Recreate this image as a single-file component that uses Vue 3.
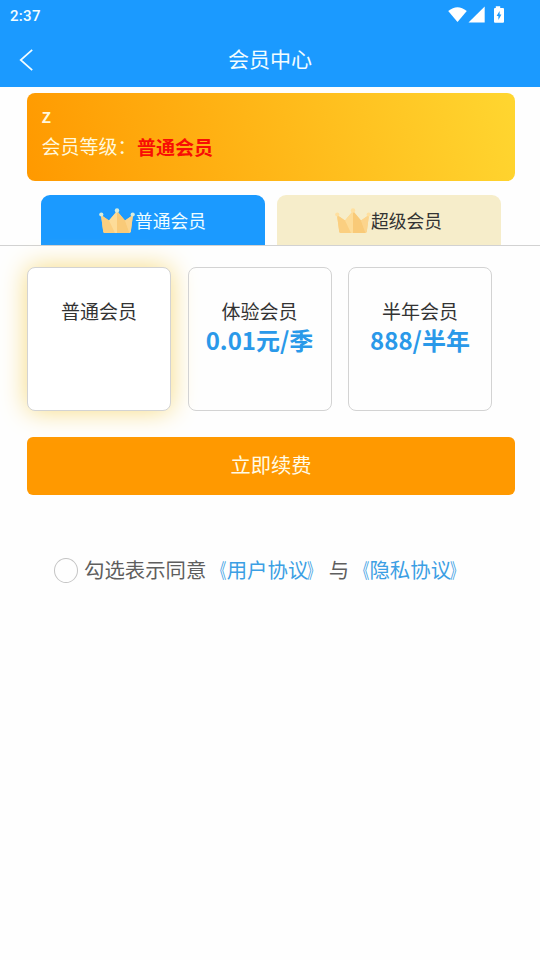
<script setup>
import { ref } from 'vue'

const activeTab = ref(0)
const activePlan = ref(0)
const agreed = ref(false)

const tabs = ['普通会员', '超级会员']
const plans = [
  { name: '普通会员', price: '' },
  { name: '体验会员', price: '0.01元/季' },
  { name: '半年会员', price: '888/半年' },
]
</script>

<template>
  <div class="page">
    <header class="header">
      <div class="status">
        <span class="clock">2:37</span>
        <svg class="status-icons" width="58" height="20" viewBox="0 0 58 20">
          <path d="M0.2 5.1Q9.5-2.8 18.8 5.1L9.5 16Z" fill="#fff" />
          <path d="M20.5 16.5L36.7 0.5V16.5Z" fill="#fff" />
          <path d="M47.8 0.2h4.4v1.7H55a1 1 0 0 1 1 1V15.8a1 1 0 0 1-1 1H47a1 1 0 0 1-1-1V2.9a1 1 0 0 1 1-1h.8Z" fill="#fff" />
          <path d="M51.6 5L48.6 10h1.8v3.9l3-5.3h-1.8Z" fill="#1b9aff" />
        </svg>
      </div>
      <div class="nav">
        <svg class="back" width="16" height="24" viewBox="0 0 16 24">
          <path d="M13.2 1.8L1.7 12L13.2 22.2" fill="none" stroke="#f2fdff" stroke-width="1.7" />
        </svg>
        <h1 class="title">会员中心</h1>
      </div>
    </header>

    <section class="card">
      <div class="user">z</div>
      <div class="level">会员等级：<b class="level-name">普通会员</b></div>
    </section>

    <nav class="tabs">
      <div
        v-for="(tab, i) in tabs"
        :key="tab"
        class="tab"
        :class="{ active: activeTab === i }"
        @click="activeTab = i"
      >
        <svg class="crown" width="36" height="26" viewBox="0 0 36 26">
          <path d="M2 7L10 12.5L18 3L26 12.5L34 7L31.8 23.5Q31.6 25 30 25H6Q4.4 25 4.2 23.5Z" fill="#fbd286" />
          <path d="M18 3L26 12.5L30.5 25H18Z" fill="#f9ca78" />
          <path d="M18 3L10 12.5L5.5 25H18Z" fill="#fddc98" />
          <path d="M2 7L10 12.5L16 25H6Q4.4 25 4.2 23.5Z" fill="#fbcf80" />
          <path d="M34 7L26 12.5L30.5 25L31.8 23.5Z" fill="#fcd48c" />
          <g class="pearls">
            <circle cx="2.3" cy="6.5" r="2.1" />
            <circle cx="18" cy="2.5" r="2.2" />
            <circle cx="33.7" cy="6.5" r="2.1" />
          </g>
        </svg>
        <span class="tab-label">{{ tab }}</span>
      </div>
    </nav>

    <section class="plans">
      <div
        v-for="(plan, i) in plans"
        :key="plan.name"
        class="plan"
        :class="{ selected: activePlan === i }"
        @click="activePlan = i"
      >
        <div class="plan-name">{{ plan.name }}</div>
        <div class="plan-price">{{ plan.price }}</div>
      </div>
    </section>

    <button class="renew">立即续费</button>

    <div class="agreement" @click="agreed = !agreed">
      <span class="radio" :class="{ checked: agreed }"></span>
      <span class="terms">勾选表示同意<a><i class="open">《</i>用户协议<i class="close">》</i></a>与<a><i class="open">《</i>隐私协议<i class="close">》</i></a></span>
    </div>
  </div>
</template>

<style>
body {
  background: #fefefe;
}
</style>

<style scoped>
.page {
  min-height: 960px;
  font-family: "Noto Sans CJK SC", sans-serif;
  color: #333;
  overflow: hidden;
}
.header {
  height: 87px;
  background: #1b9aff;
  color: #f2fdff;
}
.status {
  display: flex;
  justify-content: space-between;
  height: 32px;
  padding: 6px 34px 0 10px;
  box-sizing: border-box;
}
.clock {
  font: 500 15px/20px Roboto, sans-serif;
  letter-spacing: 0.3px;
}
.nav {
  display: grid;
  grid-template-columns: 60px 1fr 60px;
  align-items: center;
  height: 55px;
}
.back {
  margin-left: 19px;
}
.title {
  margin: 0;
  padding-bottom: 4px;
  text-align: center;
  font-size: 21px;
  font-weight: 400;
  line-height: 30px;
}
.card {
  height: 88px;
  margin: 6px 25px 0 27px;
  padding: 9px 14px 0 14.5px;
  box-sizing: border-box;
  border-radius: 8px;
  background: linear-gradient(75deg, #ff9900, #ffd630);
  color: #fff8dc;
}
.user {
  font-size: 19.5px;
  font-weight: 500;
  line-height: 26px;
}
.level {
  display: flex;
  font-size: 19px;
  line-height: 35px;
}
.level-name {
  padding: 1px 0 0 0.5px;
  color: #f80d05;
}
.tabs {
  display: flex;
  gap: 12px;
  margin-top: 14px;
  padding: 0 39px 0 41px;
  border-bottom: 1px solid #d2d2d2;
}
.tab {
  flex: 1;
  display: flex;
  align-items: center;
  justify-content: center;
  height: 50px;
  border-radius: 9px 9px 0 0;
  background: #f6edca;
  font-size: 17.75px;
}
.tab.active {
  background: #1b9aff;
  color: #effdff;
}
.tab-label {
  margin-right: 1px;
}
.crown {
  margin-top: 2px;
}
.pearls {
  fill: #ffe0a0;
}
.active .pearls {
  fill: #d8ecdc;
}
.plans {
  display: grid;
  grid-template-columns: repeat(3, 144px);
  column-gap: 16.5px;
  margin: 21px 0 0 27px;
}
.plan {
  height: 144px;
  padding-top: 28px;
  box-sizing: border-box;
  border: 1px solid #d3d3d3;
  border-radius: 8px;
  text-align: center;
}
.plan.selected {
  background: #fff;
  box-shadow: 0 0 27px #f8dc80;
}
.plan-name {
  font-size: 19px;
  line-height: 30px;
}
.plan-price {
  color: #2a99e9;
  font-size: 24px;
  font-weight: 700;
  line-height: 28px;
}
.renew {
  display: block;
  width: 488px;
  height: 58px;
  margin: 26px 0 0 27px;
  padding: 0 0 5px;
  border: 0;
  border-radius: 6px;
  background: #ff9900;
  color: #fffbe6;
  font-family: inherit;
  font-size: 20.3px;
}
.agreement {
  display: flex;
  align-items: center;
  gap: 6px;
  margin: 55px 0 0 54px;
  font-size: 20.4px;
  line-height: 40px;
  color: #5e5e5e;
}
.terms {
  padding-bottom: 2px;
  margin-top: -1px;
}
.agreement a {
  color: #3c9fe4;
}
.agreement i {
  display: inline-block;
  font-style: normal;
}
.open {
  transform: scaleX(0.64);
  transform-origin: right;
}
.close {
  transform: translateX(-1px) scaleX(0.64);
  transform-origin: left;
}
.radio {
  width: 24px;
  height: 25px;
  border: 1px solid #c4c4c4;
  border-radius: 50%;
  box-sizing: border-box;
}
.radio.checked {
  background: #1b9aff;
}
</style>
